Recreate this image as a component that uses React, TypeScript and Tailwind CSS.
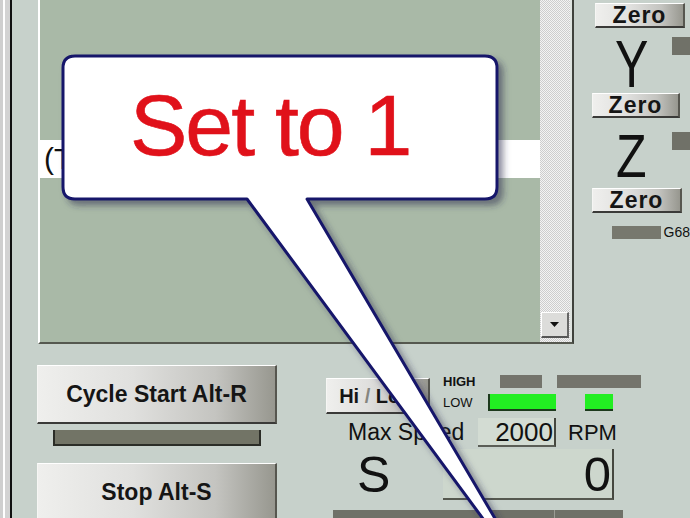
const btn =
  "flex shrink-0 items-center justify-center border-t border-l border-t-white border-l-[#f6f6f4] border-b-2 border-r-2 border-b-[#3a3a38] border-r-[#56564f] bg-[linear-gradient(90deg,#efefed_0%,#e0e0de_40%,#c4c4c0_75%,#97978f_100%)] font-bold text-[#151515]";

function Zero({ className }: { className: string }) {
  return <div className={btn + " h-[25px] text-[23px] leading-none tracking-[1px] " + className}>Zero</div>;
}

function CodeBox() {
  return (
    <div className="flex w-[536px] shrink-0 border-b-2 border-l-2 border-r-2 border-b-[#55584f] border-l-white border-r-[#3f423c]">
      <div className="flex w-[500px] flex-col bg-[#a9b9a7]">
        <div className="h-[140px] shrink-0" />
        <div className="h-[38px] shrink-0 bg-white pl-[4px] text-[30px] leading-[38px] text-[#111]">(T</div>
      </div>
      <div className="flex w-[30px] flex-col justify-end bg-[repeating-conic-gradient(#f3f3f3_0_25%,#cdcdcd_0_50%)] bg-[length:2px_2px] pb-[4px]">
        <div className="mx-[1px] flex h-[26px] w-[28px] items-center justify-center border-t border-l border-white border-b-2 border-r-2 border-b-[#555] border-r-[#666] bg-[#dcdcda]">
          <svg width="9" height="5" viewBox="0 0 9 5">
            <path d="M0 0H9L4.5 5Z" fill="#111" />
          </svg>
        </div>
      </div>
      <div className="w-[2px] bg-[#dfe4e0]" />
    </div>
  );
}

function AxisColumn() {
  return (
    <div className="flex w-[116px] shrink-0 flex-col">
      <Zero className="ml-[21px] mt-[3px] w-[90px]" />
      <div className="flex h-[65px] shrink-0 items-start">
        <span className="ml-[41px] mt-[18px] block w-[36px] scale-y-[1.33] text-center text-[50px] leading-[36px]">Y</span>
        <div className="ml-[24px] mt-[9px] h-[18px] w-[20px] bg-[#707168]" />
      </div>
      <Zero className="ml-[18px] w-[88px]" />
      <div className="flex h-[70px] shrink-0 items-start">
        <span className="ml-[41px] mt-[20px] block w-[36px] scale-y-[1.23] text-center text-[50px] leading-[36px]">Z</span>
        <div className="ml-[24px] mt-[14px] h-[18px] w-[20px] bg-[#707168]" />
      </div>
      <Zero className="ml-[18px] w-[90px]" />
      <div className="mt-[12px] flex items-center">
        <div className="ml-[38px] h-[13px] w-[51px] bg-[#77786e]" />
        <span className="ml-[3px] text-[14px] leading-none">G68</span>
      </div>
    </div>
  );
}

function LeftButtons() {
  return (
    <div className="ml-[25px] flex w-[240px] shrink-0 flex-col">
      <div className={btn + " mt-[21px] h-[59px] text-[23px]"}>Cycle Start Alt-R</div>
      <div className="ml-[16px] mt-[6px] h-[16px] w-[208px] shrink-0 border-2 border-t-0 border-[#2b2d27] bg-[#727466]" />
      <div className={btn + " mt-[17px] h-[59px] text-[23px]"}>Stop Alt-S</div>
    </div>
  );
}

function Spindle() {
  return (
    <div className="ml-[49px] flex flex-col">
      <div className="mt-[31px] flex h-[39px] shrink-0 items-start">
        <div className={btn + " mt-[3px] h-[36px] w-[104px] text-[20px]"}>
          <span>
            Hi <span className="text-[#85857f]">/</span> Low
          </span>
        </div>
        <div className="ml-[13px] flex flex-col font-bold">
          <div className="flex h-[19px] items-start">
            <span className="w-[45px] text-[13px] leading-[13px]">HIGH</span>
            <div className="ml-[12px] h-[13px] w-[42px] bg-[#74746c]" />
            <div className="ml-[15px] h-[13px] w-[84px] bg-[#74746c]" />
          </div>
          <div className="flex h-[17px] items-start">
            <span className="w-[45px] text-[13px] font-normal leading-[17px]">LOW</span>
            <div className="h-[17px] w-[68px] border-b-2 border-l-2 border-[#1d3a1d] bg-[#22ee22]" />
            <div className="ml-[29px] h-[17px] w-[28px] border-b-2 border-[#1d3a1d] bg-[#22ee22]" />
          </div>
        </div>
      </div>
      <div className="mt-[4px] flex h-[29px] shrink-0 items-center">
        <span className="w-[152px] pl-[22px] text-[23px] leading-none">Max Speed</span>
        <div className="h-[29px] w-[78px] border-b-2 border-r-2 border-b-[#5b5e57] border-r-[#45473f] bg-[#d3dcd3] pr-[1px] text-right text-[26px] leading-[29px]">
          2000
        </div>
        <span className="ml-[12px] text-[22px] leading-none">RPM</span>
      </div>
      <div className="mt-[2px] flex h-[51px] shrink-0 items-center">
        <span className="w-[117px] pl-[31px] text-[50px] leading-none">S</span>
        <div className="h-[51px] w-[171px] border-b-2 border-r-2 border-b-[#55584f] border-r-[#45473f] bg-[#cdd7cd] pr-[1px] text-right text-[49px] leading-[51px]">
          0
        </div>
      </div>
      <div className="ml-[7px] mt-[10px] flex h-[10px] w-[290px] shrink-0 bg-[#6f7168]">
        <div className="w-[222px] border-r border-[#9a9c94]" />
      </div>
    </div>
  );
}

function Callout() {
  return (
    <div className="pointer-events-none absolute inset-0">
      <svg width="690" height="518" className="absolute left-0 top-0">
        <defs>
          <filter id="sh" x="-10%" y="-10%" width="130%" height="130%">
            <feDropShadow dx="5" dy="5" stdDeviation="3" floodColor="#2c2c4a" floodOpacity="0.5" />
          </filter>
        </defs>
        <path
          d="M75 56H485Q497 56 497 68V187Q497 199 485 199H307L543 600L247 199H75Q63 199 63 187V68Q63 56 75 56Z"
          fill="#fff"
          stroke="#16166b"
          strokeWidth="3"
          strokeLinejoin="round"
          filter="url(#sh)"
        />
      </svg>
      <div className="absolute left-[130px] top-[82px] text-[86px] leading-none tracking-[-2px] text-[#e0111a] [-webkit-text-stroke:0.6px_#e0111a]">
        Set to 1
      </div>
    </div>
  );
}

export default function App() {
  return (
    <div className="relative flex h-[518px] w-[690px] overflow-hidden bg-[#c7d1cb] font-['Liberation_Sans',Arial,sans-serif] text-[#111]">
      {/* window edge */}
      <div className="flex h-full w-[12px] shrink-0">
        <div className="w-[3px] bg-[#cfcfcf]" />
        <div className="w-[2px] bg-white" />
        <div className="w-[5px] bg-[#d3d3d3]" />
        <div className="w-[2px] bg-[#111]" />
      </div>
      <div className="flex w-[678px] flex-col">
        <div className="flex h-[344px] shrink-0">
          <div className="w-[26px] shrink-0" />
          <CodeBox />
          <AxisColumn />
        </div>
        <div className="flex flex-1">
          <LeftButtons />
          <Spindle />
        </div>
      </div>
      <Callout />
    </div>
  );
}
